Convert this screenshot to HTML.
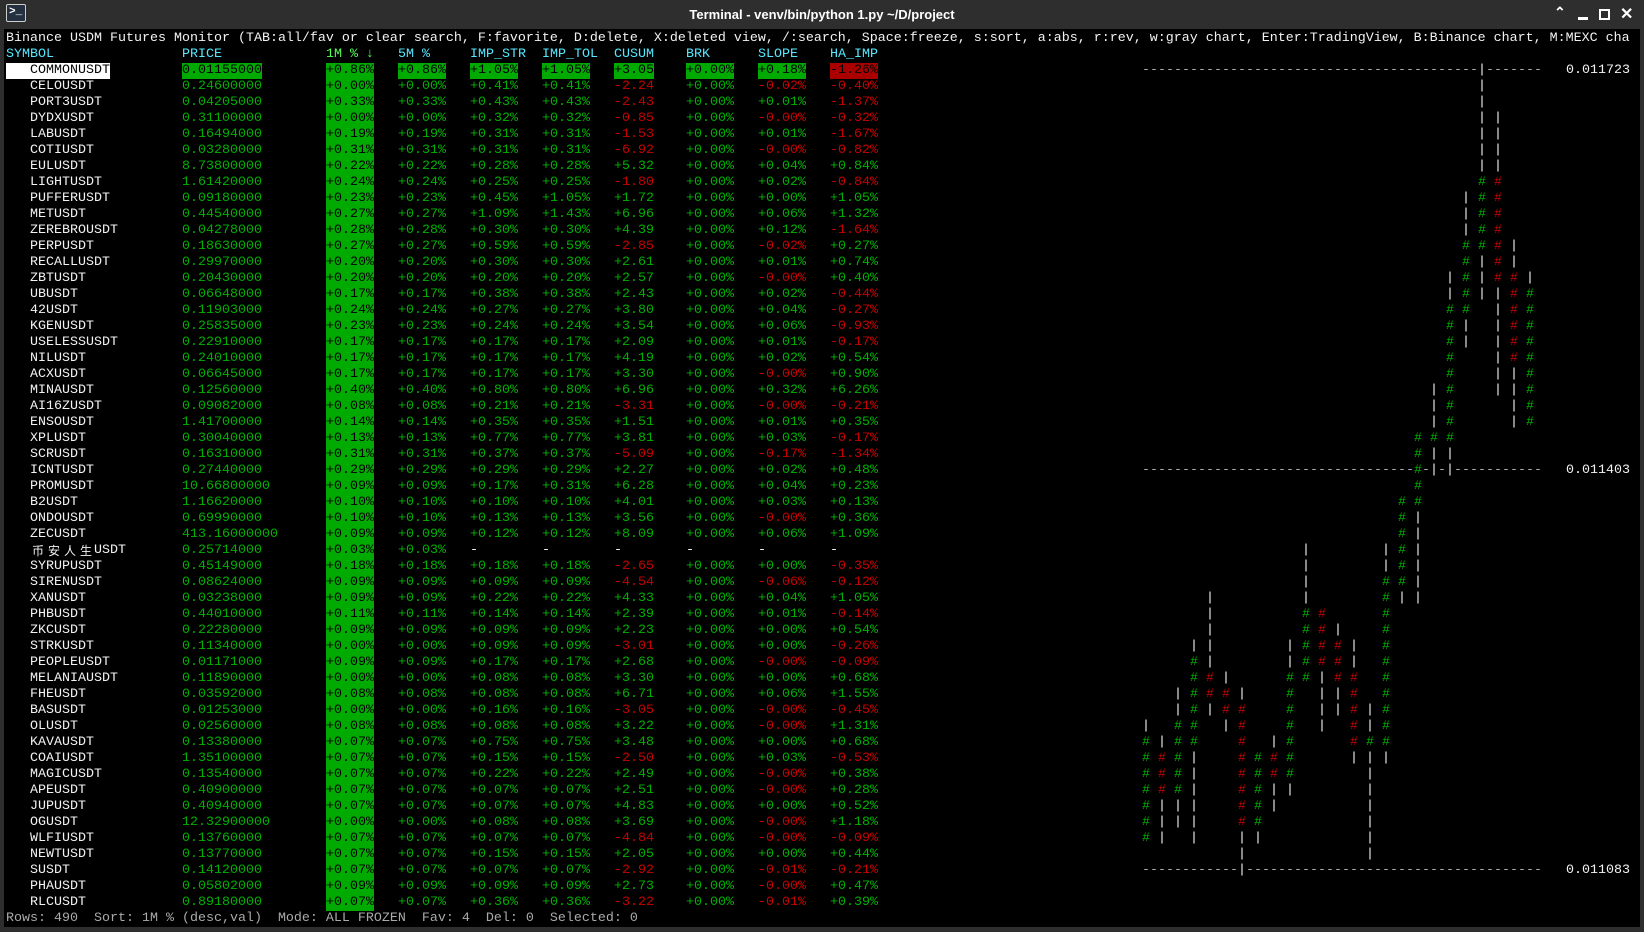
<!DOCTYPE html>
<html><head><meta charset="utf-8"><style>
html,body{margin:0;padding:0;background:#2e2e2e;width:1644px;height:932px;overflow:hidden}
#win{position:absolute;left:0;top:0;width:1644px;height:932px;background:#2e2e2e;border-radius:6px 6px 0 0}
#tb{position:absolute;left:0;top:0;width:1644px;height:29px;color:#fff;font:bold 13px "Liberation Sans",sans-serif}
#term{position:absolute;left:4px;top:29px;width:1636px;height:898px;background:#000;overflow:hidden}
.c{position:absolute;font-family:"Liberation Mono","DejaVu Sans Mono",monospace;font-size:13.33px;line-height:16px;height:16px;white-space:pre}
.g{color:#00b000}.r{color:#c80000}.w{color:#f2f2f2}.cy{color:#55e8ff}.lg{color:#55ff55}.gr{color:#aaa}
.bg{background:#00aa00;color:#000}.br{background:#aa0000;color:#000}
.cj{display:inline-block;width:16px;font-family:"Noto Sans CJK SC",sans-serif;font-size:12px;text-align:center;vertical-align:top}
</style></head><body><div id="win">
<div id="tb">
<div style="position:absolute;left:6px;top:4px;width:20px;height:18px;border:1px solid #ccc;background:#243040;border-radius:2px;font:bold 11px 'Liberation Mono',monospace;line-height:14px;color:#fff;padding-left:2px;box-sizing:border-box">&gt;_</div>
<div style="position:absolute;left:0;width:1644px;top:7px;text-align:center">Terminal - venv/bin/python 1.py ~/D/project</div>
<div style="position:absolute;left:1554px;top:4px;font-size:14px">&#8963;</div>
<div style="position:absolute;left:1578px;top:17px;width:10px;height:3px;background:#fff"></div>
<div style="position:absolute;left:1599px;top:9px;width:7px;height:7px;border:2px solid #fff"></div>
<div style="position:absolute;left:1620px;top:4px;font:bold 16px 'Liberation Sans',sans-serif">&#10005;</div>
</div>
<div id="term"></div></div>
<script>
var T=document.getElementById('term');
function put(col,row,txt,cls){var s=document.createElement('div');s.className='c '+(cls||'');s.style.left=(2+col*8)+'px';s.style.top=(2+row*16)+'px';s.textContent=txt;T.appendChild(s);return s;}
put(0,0,'Binance USDM Futures Monitor (TAB:all/fav or clear search, F:favorite, D:delete, X:deleted view, /:search, Space:freeze, s:sort, a:abs, r:rev, w:gray chart, Enter:TradingView, B:Binance chart, M:MEXC cha','w');
put(0,1,'SYMBOL','cy');put(22,1,'PRICE','cy');put(40,1,'1M % \u2193','lg');put(49,1,'5M %','cy');put(58,1,'IMP_STR','cy');put(67,1,'IMP_TOL','cy');put(76,1,'CUSUM','cy');put(85,1,'BRK','cy');put(94,1,'SLOPE','cy');put(103,1,'HA_IMP','cy');
var D=`COMMONUSDT 0.01155000 +0.86% +0.86% +1.05% +1.05% +3.05 +0.00% +0.18% -1.26%
CELOUSDT 0.24600000 +0.00% +0.00% +0.41% +0.41% -2.24 +0.00% -0.02% -0.40%
PORT3USDT 0.04205000 +0.33% +0.33% +0.43% +0.43% -2.43 +0.00% +0.01% -1.37%
DYDXUSDT 0.31100000 +0.00% +0.00% +0.32% +0.32% -0.85 +0.00% -0.00% -0.32%
LABUSDT 0.16494000 +0.19% +0.19% +0.31% +0.31% -1.53 +0.00% +0.01% -1.67%
COTIUSDT 0.03280000 +0.31% +0.31% +0.31% +0.31% -6.92 +0.00% -0.00% -0.82%
EULUSDT 8.73800000 +0.22% +0.22% +0.28% +0.28% +5.32 +0.00% +0.04% +0.84%
LIGHTUSDT 1.61420000 +0.24% +0.24% +0.25% +0.25% -1.80 +0.00% +0.02% -0.84%
PUFFERUSDT 0.09180000 +0.23% +0.23% +0.45% +1.05% +1.72 +0.00% +0.00% +1.05%
METUSDT 0.44540000 +0.27% +0.27% +1.09% +1.43% +6.96 +0.00% +0.06% +1.32%
ZEREBROUSDT 0.04278000 +0.28% +0.28% +0.30% +0.30% +4.39 +0.00% +0.12% -1.64%
PERPUSDT 0.18630000 +0.27% +0.27% +0.59% +0.59% -2.85 +0.00% -0.02% +0.27%
RECALLUSDT 0.29970000 +0.20% +0.20% +0.30% +0.30% +2.61 +0.00% +0.01% +0.74%
ZBTUSDT 0.20430000 +0.20% +0.20% +0.20% +0.20% +2.57 +0.00% -0.00% +0.40%
UBUSDT 0.06648000 +0.17% +0.17% +0.38% +0.38% +2.43 +0.00% +0.02% -0.44%
42USDT 0.11903000 +0.24% +0.24% +0.27% +0.27% +3.80 +0.00% +0.04% -0.27%
KGENUSDT 0.25835000 +0.23% +0.23% +0.24% +0.24% +3.54 +0.00% +0.06% -0.93%
USELESSUSDT 0.22910000 +0.17% +0.17% +0.17% +0.17% +2.09 +0.00% +0.01% -0.17%
NILUSDT 0.24010000 +0.17% +0.17% +0.17% +0.17% +4.19 +0.00% +0.02% +0.54%
ACXUSDT 0.06645000 +0.17% +0.17% +0.17% +0.17% +3.30 +0.00% -0.00% +0.90%
MINAUSDT 0.12560000 +0.40% +0.40% +0.80% +0.80% +6.96 +0.00% +0.32% +6.26%
AI16ZUSDT 0.09082000 +0.08% +0.08% +0.21% +0.21% -3.31 +0.00% -0.00% -0.21%
ENSOUSDT 1.41700000 +0.14% +0.14% +0.35% +0.35% +1.51 +0.00% +0.01% +0.35%
XPLUSDT 0.30040000 +0.13% +0.13% +0.77% +0.77% +3.81 +0.00% +0.03% -0.17%
SCRUSDT 0.16310000 +0.31% +0.31% +0.37% +0.37% -5.09 +0.00% -0.17% -1.34%
ICNTUSDT 0.27440000 +0.29% +0.29% +0.29% +0.29% +2.27 +0.00% +0.02% +0.48%
PROMUSDT 10.66800000 +0.09% +0.09% +0.17% +0.31% +6.28 +0.00% +0.04% +0.23%
B2USDT 1.16620000 +0.10% +0.10% +0.10% +0.10% +4.01 +0.00% +0.03% +0.13%
ONDOUSDT 0.69990000 +0.10% +0.10% +0.13% +0.13% +3.56 +0.00% -0.00% +0.36%
ZECUSDT 413.16000000 +0.09% +0.09% +0.12% +0.12% +8.09 +0.00% +0.06% +1.09%
CJK 0.25714000 +0.03% +0.03% - - - - - -
SYRUPUSDT 0.45149000 +0.18% +0.18% +0.18% +0.18% -2.65 +0.00% +0.00% -0.35%
SIRENUSDT 0.08624000 +0.09% +0.09% +0.09% +0.09% -4.54 +0.00% -0.06% -0.12%
XANUSDT 0.03238000 +0.09% +0.09% +0.22% +0.22% +4.33 +0.00% +0.04% +1.05%
PHBUSDT 0.44010000 +0.11% +0.11% +0.14% +0.14% +2.39 +0.00% +0.01% -0.14%
ZKCUSDT 0.22280000 +0.09% +0.09% +0.09% +0.09% +2.23 +0.00% +0.00% +0.54%
STRKUSDT 0.11340000 +0.00% +0.00% +0.09% +0.09% -3.01 +0.00% +0.00% -0.26%
PEOPLEUSDT 0.01171000 +0.09% +0.09% +0.17% +0.17% +2.68 +0.00% -0.00% -0.09%
MELANIAUSDT 0.11890000 +0.00% +0.00% +0.08% +0.08% +3.30 +0.00% +0.00% +0.68%
FHEUSDT 0.03592000 +0.08% +0.08% +0.08% +0.08% +6.71 +0.00% +0.06% +1.55%
BASUSDT 0.01253000 +0.00% +0.00% +0.16% +0.16% -3.05 +0.00% -0.00% -0.45%
OLUSDT 0.02560000 +0.08% +0.08% +0.08% +0.08% +3.22 +0.00% -0.00% +1.31%
KAVAUSDT 0.13380000 +0.07% +0.07% +0.75% +0.75% +3.48 +0.00% +0.00% +0.68%
COAIUSDT 1.35100000 +0.07% +0.07% +0.15% +0.15% -2.50 +0.00% +0.03% -0.53%
MAGICUSDT 0.13540000 +0.07% +0.07% +0.22% +0.22% +2.49 +0.00% -0.00% +0.38%
APEUSDT 0.40900000 +0.07% +0.07% +0.07% +0.07% +2.51 +0.00% -0.00% +0.28%
JUPUSDT 0.40940000 +0.07% +0.07% +0.07% +0.07% +4.83 +0.00% +0.00% +0.52%
OGUSDT 12.32900000 +0.00% +0.00% +0.08% +0.08% +3.69 +0.00% -0.00% +1.18%
WLFIUSDT 0.13760000 +0.07% +0.07% +0.07% +0.07% -4.84 +0.00% -0.00% -0.09%
NEWTUSDT 0.13770000 +0.07% +0.07% +0.15% +0.15% +2.05 +0.00% +0.00% +0.44%
SUSDT 0.14120000 +0.07% +0.07% +0.07% +0.07% -2.92 +0.00% -0.01% -0.21%
PHAUSDT 0.05802000 +0.09% +0.09% +0.09% +0.09% +2.73 +0.00% -0.00% +0.47%
RLCUSDT 0.89180000 +0.07% +0.07% +0.36% +0.36% -3.22 +0.00% -0.01% +0.39%`.split('\n');
var cols=[22,40,49,58,67,76,85,94,103];
D.forEach(function(l,i){var f=l.split(' ');var row=2+i;
 if(i==0){var s=put(0,row,'   '+f[0]+'  ','');s.style.background='#fff';s.style.color='#000';s.style.width='104px';}
 else if(f[0]=='CJK'){var s=put(3,row,'','w');s.innerHTML='<span class="cj">币</span><span class="cj">安</span><span class="cj">人</span><span class="cj">生</span>USDT';}
 else put(3,row,f[0],'w');
 for(var k=1;k<f.length;k++){var v=f[k];var cls=v.charAt(0)=='-'&&v.length>1?'r':'g';if(v=='-')cls='w';
  if(k==2)cls='bg';
  if(i==0){cls=(v.charAt(0)=='-')?'br':'bg';}
  put(cols[k-1],row,v,cls);}
});
put(0,55,'Rows: 490  Sort: 1M % (desc,val)  Mode: ALL FROZEN  Fav: 4  Del: 0  Selected: 0','gr');
var grid={};
function seg(col,a,b,ch,cl){for(var r=a;r<=b;r++)grid[r+','+col]=[ch,cl];}
[2,27,52].forEach(function(r){for(var c=142;c<=191;c++)grid[r+','+c]=['-','gr'];});
var C=[[184,[['|',2,8],['G',9,13],['|',14,16]]],[186,[['|',5,8],['R',9,15],['|',16,22]]],[188,[['|',13,14],['R',15,20],['|',21,24]]],[190,[['|',15,15],['G',16,24]]],[182,[['|',10,12],['G',13,17],['|',18,19]]],[180,[['|',15,16],['G',17,25],['|',26,27]]],[178,[['|',22,24],['G',25,25],['|',26,27]]],[176,[['G',25,29],['|',30,35]]],[174,[['G',29,34],['|',35,35]]],[172,[['|',32,33],['G',34,44],['|',45,45]]],[170,[['|',42,43],['G',44,44],['|',45,51]]],[168,[['|',38,39],['R',40,44],['|',45,45]]],[166,[['|',37,37],['R',38,40],['|',41,42]]],[164,[['R',36,39],['|',40,43]]],[162,[['|',32,35],['G',36,40]]],[160,[['|',38,39],['G',40,46],['|',47,47]]],[158,[['|',44,44],['R',45,46],['|',47,48]]],[156,[['G',45,49],['|',50,50]]],[154,[['|',41,41],['R',42,49],['|',50,52]]],[152,[['|',40,40],['R',41,42],['|',43,43]]],[150,[['|',35,39],['R',40,41],['|',42,42]]],[148,[['|',38,38],['G',39,44],['|',45,50]]],[146,[['|',41,42],['G',43,47],['|',48,49]]],[144,[['|',44,44],['R',45,47],['|',48,50]]],[142,[['|',43,43],['G',44,50]]]];
C.forEach(function(c){c[1].forEach(function(s){var ch=s[0]=='|'?'|':'#';var cl=s[0]=='|'?'w':(s[0]=='G'?'g':'r');seg(c[0],s[1],s[2],ch,cl);});});
for(var k in grid){var p=k.split(',');put(+p[1],+p[0],grid[k][0],grid[k][1]);}
put(195,2,'0.011723','w');put(195,27,'0.011403','w');put(195,52,'0.011083','w');
</script></body></html>
